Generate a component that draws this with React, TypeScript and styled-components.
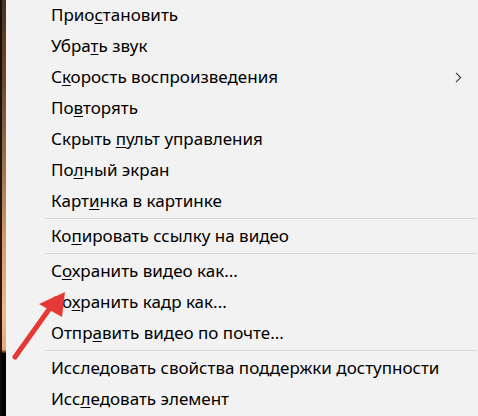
import React from "react";
import styled, { createGlobalStyle } from "styled-components";

const Global = createGlobalStyle`
  html, body { margin: 0; padding: 0; }
  body { width: 478px; height: 416px; overflow: hidden; background: #000; }
`;

const Page = styled.div`
  position: relative;
  display: flex;
  width: 478px;
  height: 416px;
`;

const VideoStrip = styled.div`
  width: 6px;
  flex: none;
  background:
    linear-gradient(90deg, rgba(20,10,5,0.9) 0 2px, transparent 2px 6px),
    linear-gradient(180deg, #4a3220 0%, #6b4a2c 20%, #9a7450 40%, #d39b68 58%, #f0b88a 75%, #e9a877 84%, #000 85%, #000 100%);
`;

const Menu = styled.div`
  flex: 1;
  display: flex;
  flex-direction: column;
  background: #f2f2f2;
  font-family: "Noto Sans", "Open Sans", sans-serif;
  font-size: 17px;
  color: #000;
`;

const Item = styled.div`
  display: flex;
  align-items: center;
  justify-content: space-between;
  height: 31px;
  padding-left: 45px;
  padding-right: 16px;
  white-space: nowrap;
  flex: none;
`;

const Label = styled.span`
  line-height: 20px;
  margin-top: -2px;
  u {
    text-decoration: underline;
    text-underline-offset: 2px;
    text-decoration-thickness: 1px;
  }
`;

const Separator = styled.div`
  flex: none;
  height: 4px;
  display: flex;
  align-items: flex-start;
  padding-top: 1px;
  box-sizing: border-box;
  margin-left: 39px;
  margin-right: 2px;
  &::before {
    content: "";
    display: block;
    width: 100%;
    height: 1px;
    background: #d7d7d7;
  }
`;

const Arrow = styled.svg`
  position: absolute;
  left: 0;
  top: 0;
  pointer-events: none;
`;

type Entry = { pre: string; key?: string; post?: string; sub?: boolean } | "sep";

const entries: Entry[] = [
  { pre: "Прио", key: "с", post: "тановить" },
  { pre: "Убра", key: "т", post: "ь звук" },
  { pre: "С", key: "к", post: "орость воспроизведения", sub: true },
  { pre: "По", key: "в", post: "торять" },
  { pre: "Скрыть ", key: "п", post: "ульт управления" },
  { pre: "По", key: "л", post: "ный экран" },
  { pre: "Карт", key: "и", post: "нка в картинке" },
  "sep",
  { pre: "Ко", key: "п", post: "ировать ссылку на видео" },
  "sep",
  { pre: "С", key: "о", post: "хранить видео как..." },
  { pre: "Со", key: "х", post: "ранить кадр как..." },
  { pre: "Отпр", key: "а", post: "вить видео по почте..." },
  "sep",
  { pre: "Исследовать свойства поддержки доступности" },
  { pre: "Исс", key: "л", post: "едовать элемент" },
];

const Chevron = () => (
  <svg width="7" height="11" viewBox="0 0 7 11">
    <path d="M1 0.8 L5.6 5.5 L1 10.2" fill="none" stroke="#3c3c3c" strokeWidth="1.1" />
  </svg>
);

export default function App() {
  return (
    <>
      <Global />
      <Page>
        <VideoStrip />
        <Menu>
          {entries.map((e, i) =>
            e === "sep" ? (
              <Separator key={i} />
            ) : (
              <Item key={i}>
                <Label>
                  {e.pre}
                  {e.key && <u>{e.key}</u>}
                  {e.post}
                </Label>
                {e.sub && <Chevron />}
              </Item>
            )
          )}
        </Menu>
        <Arrow width="478" height="416" viewBox="0 0 478 416">
          <line x1="15" y1="357" x2="50" y2="308" stroke="#e53935" strokeWidth="5" strokeLinecap="round" />
          <polygon points="65,292 39,304 62,317" fill="#e53935" />
        </Arrow>
      </Page>
    </>
  );
}
